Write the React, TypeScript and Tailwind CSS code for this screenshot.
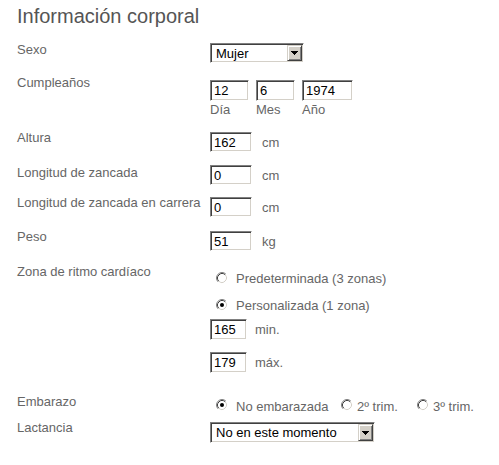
import type { ReactNode } from 'react';

// Classic Windows 2000 style sunken / raised edges
const sunken =
  'border border-t-[#808080] border-l-[#808080] border-r-white border-b-white shadow-[inset_1px_1px_0_#404040,inset_-1px_-1px_0_#d4d0c8] bg-white';
const raised =
  'bg-[#d4d0c8] border border-t-[#d4d0c8] border-l-[#d4d0c8] border-r-[#404040] border-b-[#404040] shadow-[inset_1px_1px_0_#fff,inset_-1px_-1px_0_#808080]';

function TextBox({ value, width, height = 'h-[20px]' }: { value: string; width: string; height?: string }) {
  return (
    <input
      readOnly
      value={value}
      className={`${sunken} ${width} ${height} px-[3px] text-[13px] leading-[15px] text-black outline-none`}
    />
  );
}

function Select({ value, width, height }: { value: string; width: string; height: string }) {
  return (
    <div className={`${sunken} ${width} ${height} flex items-stretch`}>
      <span className="flex-1 pl-[5px] text-black self-center leading-[15px]">{value}</span>
      <span className={`${raised} w-[15px] my-[1px] mr-[1px] flex items-center justify-center`}>
        <svg width="7" height="4" viewBox="0 0 7 4" shapeRendering="crispEdges">
          <path d="M0 0h7L3.5 4z" fill="#000" />
        </svg>
      </span>
    </div>
  );
}

function Radio({ checked = false }: { checked?: boolean }) {
  return (
    <svg width="12" height="12" viewBox="0 0 12 12" className="shrink-0">
      <circle cx="6" cy="6" r="5" fill="#fff" />
      <path d="M2.11 9.89A5.5 5.5 0 0 1 9.89 2.11" fill="none" stroke="#808080" strokeWidth="1" />
      <path d="M9.89 2.11A5.5 5.5 0 0 1 2.11 9.89" fill="none" stroke="#ffffff" strokeWidth="1" />
      <path d="M2.82 9.18A4.5 4.5 0 0 1 9.18 2.82" fill="none" stroke="#404040" strokeWidth="1" />
      <path d="M9.18 2.82A4.5 4.5 0 0 1 2.82 9.18" fill="none" stroke="#d4d0c8" strokeWidth="1" />
      {checked && <circle cx="6" cy="6" r="2" fill="#000" />}
    </svg>
  );
}

function Row({ label, className, children }: { label: string; className: string; children: ReactNode }) {
  return (
    <div className={`flex items-start ${className}`}>
      <div className="w-[193px] shrink-0">{label}</div>
      <div>{children}</div>
    </div>
  );
}

export default function App() {
  return (
    <div className="w-[499px] h-[465px] bg-white pl-[17px] font-['Liberation_Sans',Arial,sans-serif] text-[13px] leading-[15px] text-[#666]">
      <h2 className="pt-[5px] text-[20px] leading-[23px] text-[#555]">Información corporal</h2>

      {/* Sexo */}
      <Row label="Sexo" className="mt-[14px]">
        <div className="mt-[1px]">
          <Select value="Mujer" width="w-[94px]" height="h-[20px]" />
        </div>
      </Row>

      {/* Cumpleaños */}
      <Row label="Cumpleaños" className="mt-[12px]">
        <div className="mt-[5px] flex gap-[7px]">
          <div className="flex flex-col gap-[1px]">
            <TextBox value="12" width="w-[39px]" height="h-[21px]" />
            <span>Día</span>
          </div>
          <div className="flex flex-col gap-[1px]">
            <TextBox value="6" width="w-[39px]" height="h-[21px]" />
            <span>Mes</span>
          </div>
          <div className="flex flex-col gap-[1px]">
            <TextBox value="1974" width="w-[51px]" height="h-[21px]" />
            <span>Año</span>
          </div>
        </div>
      </Row>

      <Row label="Altura" className="mt-[13px]">
        <div className="mt-[2px] flex items-center gap-[10px]">
          <TextBox value="162" width="w-[42px]" />
          <span>cm</span>
        </div>
      </Row>

      <Row label="Longitud de zancada" className="mt-[13px]">
        <div className="flex items-center gap-[10px]">
          <TextBox value="0" width="w-[42px]" />
          <span>cm</span>
        </div>
      </Row>

      <Row label="Longitud de zancada en carrera" className="mt-[10px]">
        <div className="mt-[2px] flex items-center gap-[10px]">
          <TextBox value="0" width="w-[42px]" />
          <span>cm</span>
        </div>
      </Row>

      <Row label="Peso" className="mt-[12px]">
        <div className="mt-[2px] flex items-center gap-[10px]">
          <TextBox value="51" width="w-[42px]" />
          <span>kg</span>
        </div>
      </Row>

      {/* Zona de ritmo cardíaco */}
      <Row label="Zona de ritmo cardíaco" className="mt-[13px]">
        <div className="mt-[7px] flex flex-col">
          <label className="flex items-start pl-[6px]">
            <span className="mt-[1px]"><Radio /></span>
            <span className="ml-[8px]">Predeterminada (3 zonas)</span>
          </label>
          <label className="mt-[12px] flex items-start pl-[6px]">
            <span className="mt-[1px]"><Radio checked /></span>
            <span className="ml-[8px]">Personalizada (1 zona)</span>
          </label>
          <div className="mt-[6px] flex items-center gap-[8px]">
            <TextBox value="165" width="w-[37px]" height="h-[21px]" />
            <span>min.</span>
          </div>
          <div className="mt-[12px] flex items-center gap-[8px]">
            <TextBox value="179" width="w-[37px]" height="h-[21px]" />
            <span>máx.</span>
          </div>
        </div>
      </Row>

      {/* Embarazo */}
      <Row label="Embarazo" className="mt-[21px]">
        <div className="mt-[5px] flex pl-[6px]">
          <label className="w-[125px] flex items-start">
            <span><Radio checked /></span>
            <span className="ml-[8px]">No embarazada</span>
          </label>
          <label className="w-[76px] flex items-start">
            <span><Radio /></span>
            <span className="ml-[4px]">2º trim.</span>
          </label>
          <label className="flex items-start">
            <span><Radio /></span>
            <span className="ml-[4px]">3º trim.</span>
          </label>
        </div>
      </Row>

      <Row label="Lactancia" className="mt-[6px]">
        <div className="mt-[2px]">
          <Select value="No en este momento" width="w-[165px]" height="h-[21px]" />
        </div>
      </Row>
    </div>
  );
}
